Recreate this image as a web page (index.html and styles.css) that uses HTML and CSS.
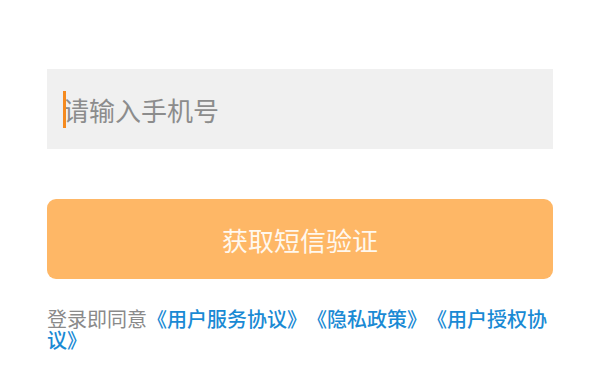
FILE: index.html
```html
<!DOCTYPE html>
<html lang="zh-CN">
<head>
    <meta charset="UTF-8">
    <meta name="viewport" content="width=device-width, initial-scale=1.0">
    <title>手机号登录</title>
    <link rel="stylesheet" href="styles.css">
</head>
<body>

    <div class="container">
        <!-- Phone input -->
        <div class="phone-input">
            <span class="caret"></span>
            <span class="placeholder">请输入手机号</span>
        </div>

        <button class="sms-button">获取短信验证</button>

        <p class="agreement">
            登录即同意<a href="#">《用户服务协议》</a><a href="#">《隐私政策》</a><a href="#">《用户授权协议》</a>
        </p>
    </div>

</body>
</html>
```

FILE: styles.css
```css
* {
    margin: 0;
    padding: 0;
    box-sizing: border-box;
}

body {
    font-family: "Noto Sans CJK SC", "Noto Sans", sans-serif;
    background-color: #fff;
}

.container {
    padding: 69px 47px 0;
}

.phone-input {
    height: 80px;
    background-color: #f0f0f0;
    display: flex;
    align-items: center;
    padding-left: 16px;
    margin-bottom: 50px;
}

.caret {
    width: 3px;
    height: 37px;
    background-color: #f58a1f;
    margin-right: -3px;
    position: relative;
    z-index: 1;
}

.placeholder {
    font-size: 26px;
    color: #8c8c8c;
}

.sms-button {
    display: block;
    width: 100%;
    height: 80px;
    font-family: inherit;
    font-size: 26px;
    color: #fff8ee;
    background-color: #feb766;
    border: none;
    border-radius: 9px;
}

.agreement {
    margin-top: 29px;
    font-size: 20px;
    line-height: 21px;
    color: #8a8a8a;
    text-spacing-trim: space-all;
}

.agreement a {
    color: #1a8ad4;
    font-weight: 500;
    text-decoration: none;
}
```
